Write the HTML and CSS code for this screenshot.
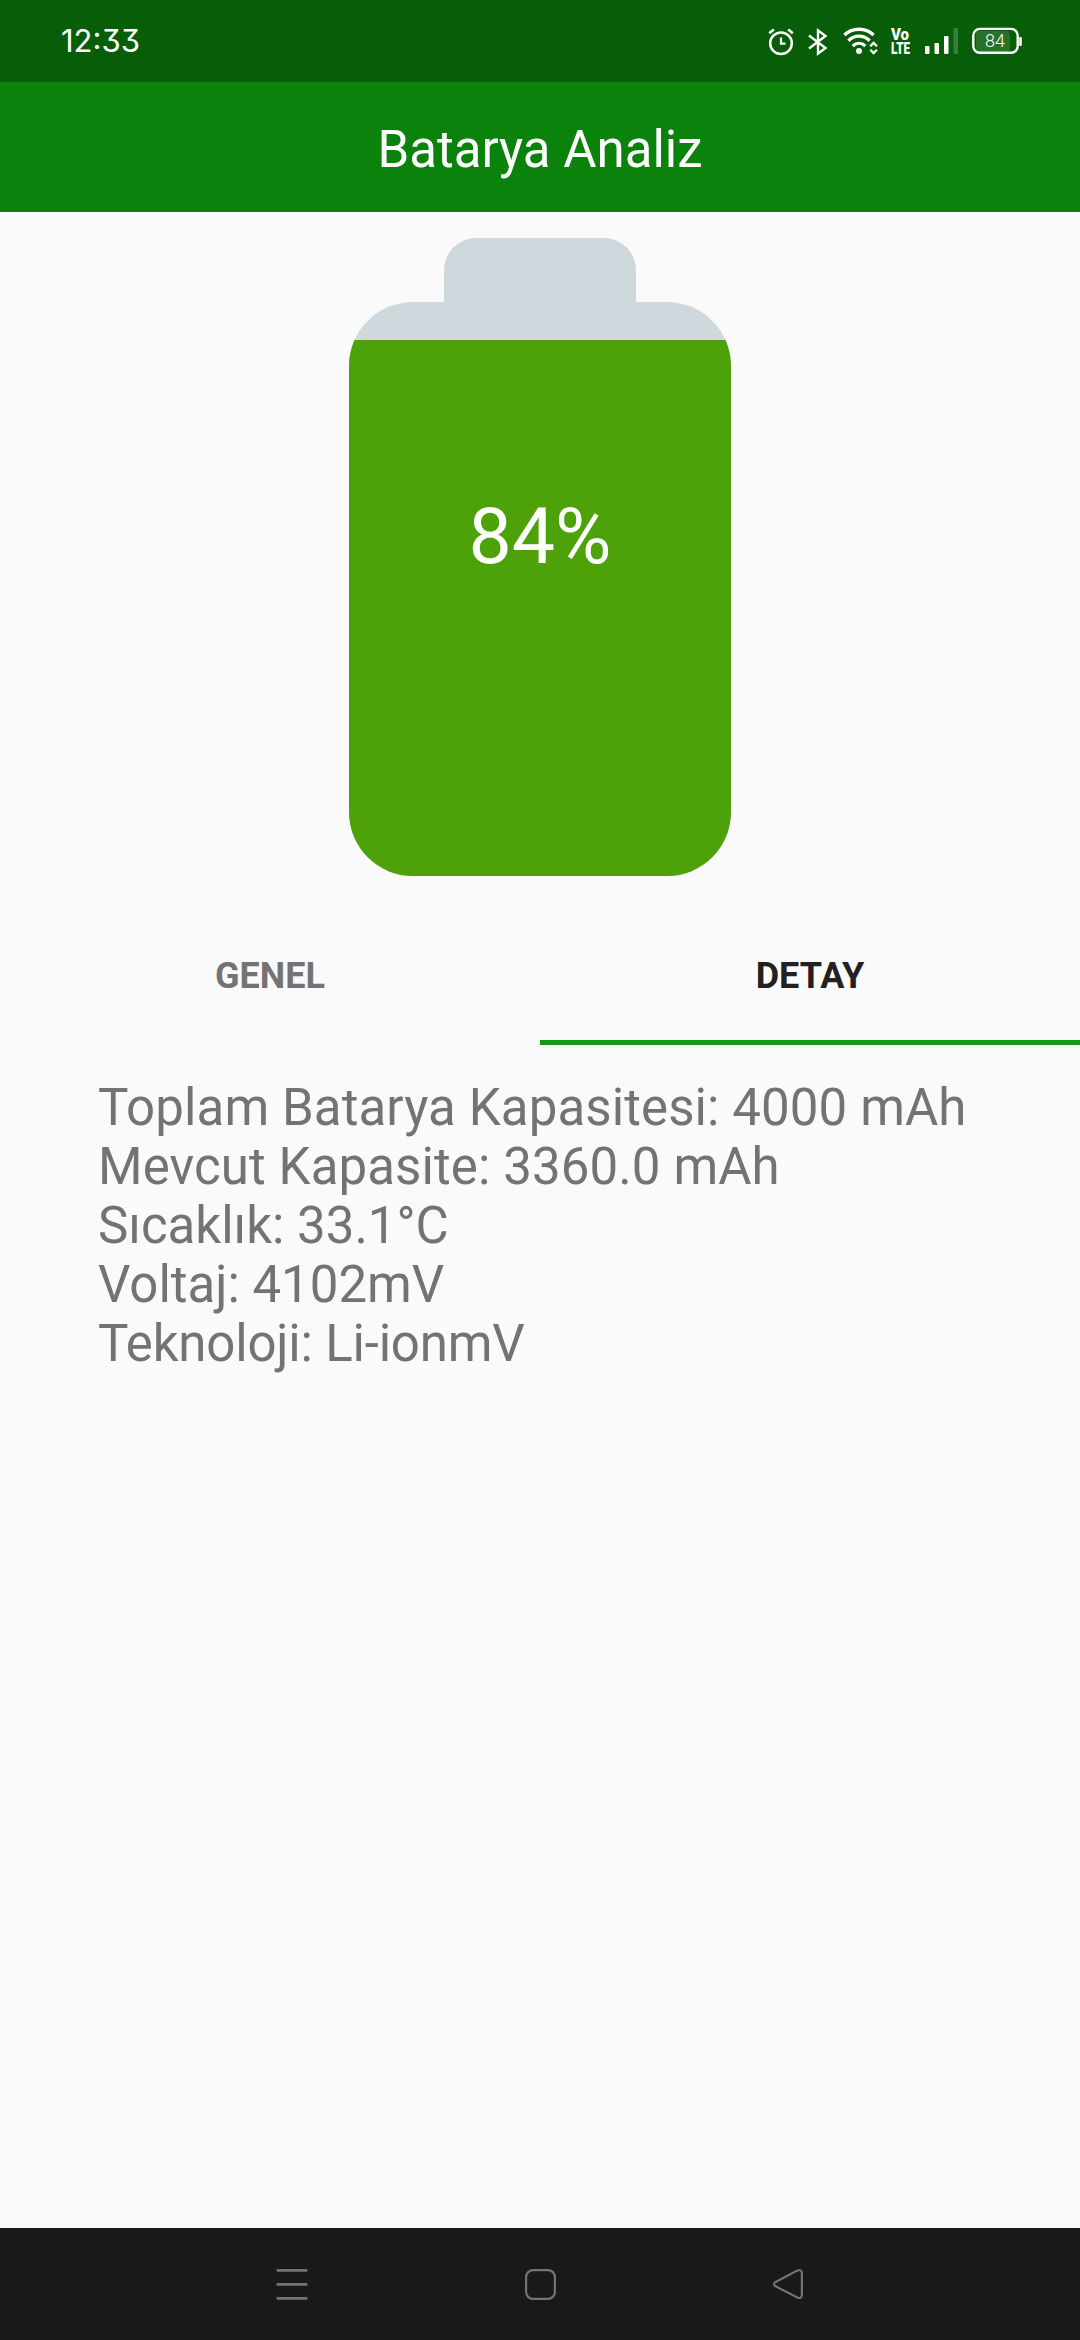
FILE: index.html
```html
<!DOCTYPE html>
<html lang="tr">
<head>
<meta charset="utf-8">
<title>Batarya Analiz</title>
<link rel="stylesheet" href="styles.css">
</head>
<body>
<div class="status-bar">
  <svg class="clock" width="82" height="30" viewBox="0 0 82 30">
    <text x="0" y="23.800" textLength="79" lengthAdjust="spacingAndGlyphs">12:33</text>
  </svg>
  <div class="status-icons">
    <svg class="alarm" width="26" height="28" viewBox="0 0 26 28" fill="none" stroke="#fff" stroke-width="2.5">
      <circle cx="13" cy="15.3" r="10.8"/>
      <path d="M13 9.5v6.2h4.5" stroke-width="2.2"/>
      <path d="M1.2 5.2 5.8 1.4M20.2 1.4l4.6 3.8" stroke-width="2.6"/>
    </svg>
    <svg class="bluetooth" width="20" height="28" viewBox="0 0 20 28" fill="none" stroke="#fff" stroke-width="2.4">
      <path d="M1 7.5 17.5 20 10 25.7V2.3L17.5 8 1 20.5"/>
    </svg>
    <svg class="wifi" width="35" height="28" viewBox="0 0 35 28" fill="none" stroke="#fff" stroke-width="3.300">
      <path d="M1.400 7C9.500-.7 22.500-.7 30.600 7"/>
      <path d="M5.400 12.700C11.500 6.700 20.500 6.700 26.600 12.700"/>
      <path d="M9.700 18C13.500 14.500 18.500 14.500 22.300 18"/>
      <circle cx="16" cy="23" r="3" fill="#fff" stroke="none"/>
      <path d="M27.300 18.300 30.600 15 33.900 18.300M27.300 21.700 30.600 25 33.900 21.700" stroke-width="2.300"/>
    </svg>
    <svg class="volte" width="20" height="28" viewBox="0 0 20 28">
      <text x="0" y="12.300" textLength="18" lengthAdjust="spacingAndGlyphs">Vo</text>
      <text x="0" y="25.600" textLength="19" lengthAdjust="spacingAndGlyphs">LTE</text>
    </svg>
    <svg class="signal" width="34" height="28" viewBox="0 0 34 28" fill="#fff">
      <rect x="0" y="18" width="4.500" height="8" rx="1"/>
      <rect x="9.500" y="15" width="4.500" height="11" rx="1"/>
      <rect x="19" y="8" width="4.500" height="18" rx="1"/>
      <rect x="28.500" y="0" width="4.500" height="26" rx="1" opacity=".2"/>
    </svg>
    <svg class="charge" width="50" height="28" viewBox="0 0 50 28">
      <rect x="4" y="3" width="34" height="21" rx="4" fill="#fff" opacity=".13"/>
      <rect x="1.300" y=".900" width="44.400" height="23.900" rx="6.500" fill="none" stroke="#fff" stroke-width="2.400"/>
      <rect x="47.200" y="9" width="2.600" height="9" rx="1" fill="#fff"/>
      <text x="23" y="18.600" text-anchor="middle">84</text>
    </svg>
  </div>
</div>

<header class="app-bar"><h1>Batarya Analiz</h1></header>

<main class="content">
  <div class="battery">
    <div class="battery-cap"></div>
    <div class="battery-body">
      <div class="battery-level"><span class="percent">84%</span></div>
    </div>
  </div>
  <nav class="tabs">
    <div class="tab">GENEL</div>
    <div class="tab active">DETAY</div>
  </nav>
  <section class="details">
    <p class="capacity">Toplam Batarya Kapasitesi: 4000 mAh</p>
    <p class="capacity">Mevcut Kapasite: 3360.0 mAh</p>
    <p>Sıcaklık: 33.1°C</p>
    <p>Voltaj: 4102mV</p>
    <p class="technology">Teknoloji: Li-ionmV</p>
  </section>
</main>

<footer class="nav-bar">
  <svg width="32" height="32" viewBox="0 0 32 32" fill="#737373">
    <rect x=".5" y="1" width="31" height="2.800" rx=".8"/>
    <rect x=".5" y="15" width="31" height="2.800" rx=".8"/>
    <rect x=".5" y="29" width="31" height="2.800" rx=".8"/>
  </svg>
  <svg width="32" height="32" viewBox="0 0 32 32" fill="none" stroke="#737373" stroke-width="2.200">
    <rect x="2.100" y="2.100" width="28.800" height="28.800" rx="7"/>
  </svg>
  <svg width="32" height="32" viewBox="0 0 32 32" fill="none" stroke="#737373" stroke-width="2.200">
    <path d="M3.200 14.200 25.300 2.500Q29.900 1 29.900 5.500V26.600Q29.900 31.100 25.300 29.600L3.200 18.100Q.8 16.100 3.200 14.200Z"/>
  </svg>
</footer>
</body>
</html>
```

FILE: styles.css
```css
* { box-sizing: border-box; margin: 0; padding: 0; }

body {
  width: 1080px;
  height: 2340px;
  display: flex;
  flex-direction: column;
  overflow: hidden;
  background: #fafafa;
  font-family: Roboto, sans-serif;
}

svg { display: block; flex: none; overflow: visible; }

.status-bar {
  height: 82px;
  flex: none;
  display: flex;
  justify-content: space-between;
  align-items: flex-start;
  padding: 28px 58px 0 61px;
  background: #085d09;
  color: #fff;
}

.clock text {
  font: 400 31px Inter, sans-serif;
  font-feature-settings: "cv09";
  fill: #fff;
}

.status-icons { display: flex; }
.bluetooth { margin-left: 14px; }
.wifi { margin-left: 15px; }
.volte { margin-left: 13px; }
.signal { margin-left: 14px; }
.charge { margin-left: 13px; }

.volte text {
  font: 900 17px Roboto, sans-serif;
  fill: #fff;
}

.charge text {
  font: 300 18px Roboto, sans-serif;
  fill: #fff;
}

.app-bar {
  height: 130px;
  flex: none;
  display: flex;
  justify-content: center;
  align-items: center;
  padding-top: 6px;
  background: #0b820b;
  color: #fff;
}

.app-bar h1 {
  font-size: 51px;
  font-weight: 400;
  line-height: 60px;
}

.content { flex: 1; }

.battery {
  display: flex;
  flex-direction: column;
  align-items: center;
  padding-top: 26px;
}

.battery-cap {
  width: 192px;
  height: 64px;
  border-radius: 32px 32px 0 0;
  background: #cfd8dd;
}

.battery-body {
  width: 382px;
  height: 574px;
  display: flex;
  flex-direction: column;
  justify-content: flex-end;
  overflow: hidden;
  border-radius: 64px;
  background: #cfd8dd;
}

.battery-level {
  height: 536px;
  padding-top: 152px;
  background: #4da109;
  color: #fff;
  text-align: center;
}

.percent {
  display: block;
  font-size: 77px;
  line-height: 90px;
}

.tabs {
  display: flex;
  height: 126px;
  margin-top: 43px;
}

.tab {
  flex: 1;
  border-bottom: 5px solid transparent;
  color: #737373;
  font-size: 36px;
  font-weight: 700;
  line-height: 115px;
  text-align: center;
}

.tab.active {
  border-bottom-color: #149915;
  color: #212121;
}

.details {
  padding: 33px 98px 0;
  color: #737373;
  font-size: 51px;
  line-height: 59px;
  white-space: nowrap;
}

.capacity { letter-spacing: .11px; }
.technology { letter-spacing: -.18px; }

.nav-bar {
  height: 112px;
  flex: none;
  display: flex;
  justify-content: center;
  gap: 216px;
  padding-top: 40px;
  background: #191919;
}
```
